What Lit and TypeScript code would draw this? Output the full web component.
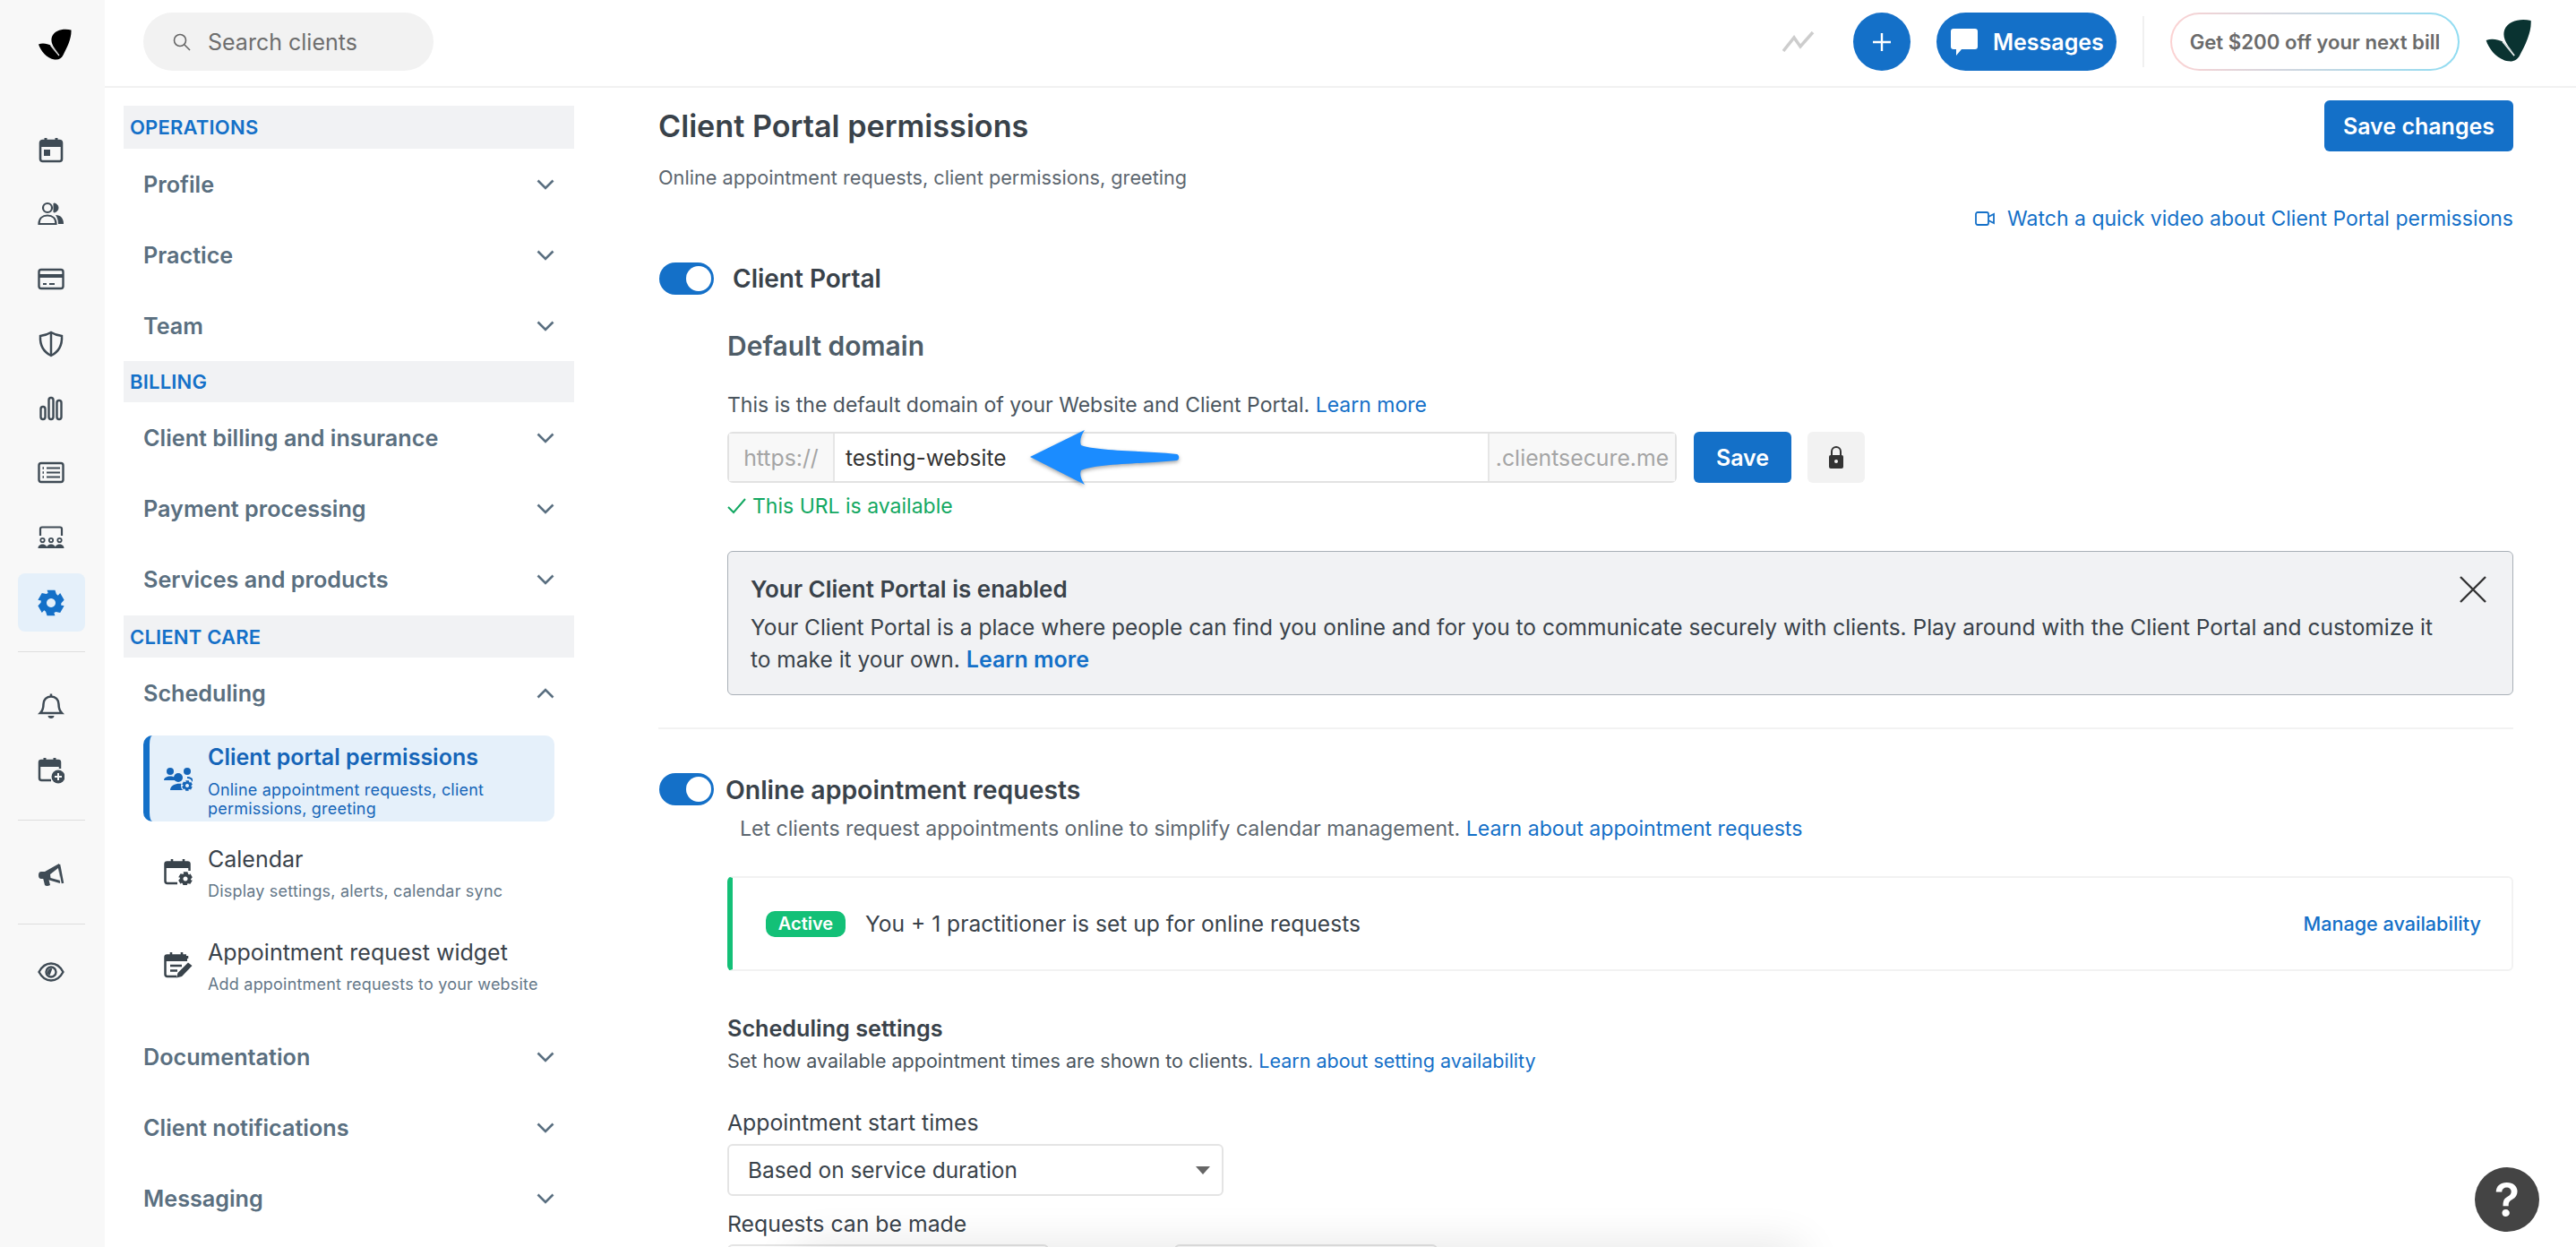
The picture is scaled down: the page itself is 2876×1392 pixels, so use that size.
import { LitElement, html, css, svg } from "lit";
import { customElement } from "lit/decorators.js";

const chev = (up = false) => html`<svg class="chev" viewBox="0 0 20 12" width="20" height="12"><path d="${up ? "M1.5 10.5 10 2l8.5 8.5" : "M1.5 1.5 10 10l8.5-8.5"}" fill="none" stroke="currentColor" stroke-width="2.6"/></svg>`;

const gearPath = (cx: number, cy: number, r: number) => {
  let d = "";
  for (let i = 0; i < 6; i++) {
    const a = (i * Math.PI) / 3 - Math.PI / 2;
    const p = (t: number, rad: number) => `${(cx + Math.cos(a + t) * rad).toFixed(2)} ${(cy + Math.sin(a + t) * rad).toFixed(2)}`;
    d += `${i ? "L" : "M"}${p(-0.3, r)}L${p(0.3, r)}L${p(0.55, r * 0.76)}L${p(0.75, r * 0.76)}`;
  }
  return d + "Z";
};

const railIcons: Record<string, unknown> = {
  calendar: svg`<path d="M9 1v5M21 1v5" stroke-width="3" /><rect x="3" y="4" width="24" height="23" rx="2.5" stroke-width="2.6"/><path d="M3 5h24v6H3z" fill="currentColor" stroke="none"/><rect x="7" y="14" width="7" height="7" fill="currentColor" stroke="none"/>`,
  people: svg`<circle cx="11" cy="7" r="5" stroke-width="2.2"/><path d="M1.5 25c0-6 4-9.500 9.500-9.500S20.500 19 20.500 25z" stroke-width="2.200"/><path d="M18 2a5 5 0 1 1 0 10z" fill="currentColor" stroke="currentColor"/><path d="M20 15c6 0 9 4 9 10h-6c0-4-1-7-3-10z" fill="currentColor" stroke="none"/>`,
  card: svg`<rect x="1.500" y="4" width="27" height="21" rx="2.500" stroke-width="2.400"/><path d="M2 9h26v4H2z" fill="currentColor" stroke="none"/><path d="M6 20h4M13 20h6" stroke-width="2.200"/>`,
  shield: svg`<path d="M15 2c4 2.500 8 3.500 12 4 .500 9-2 17-12 22C5 23 2.500 15 3 6c4-.500 8-1.500 12-4z" stroke-width="2.500"/><path d="M15 2v26" stroke-width="2.500"/>`,
  bars: svg`<rect x="3.500" y="13" width="5" height="14" rx="2.500" stroke-width="2.400"/><rect x="12.500" y="3" width="5" height="24" rx="2.500" stroke-width="2.400"/><rect x="21.500" y="6" width="5" height="21" rx="2.500" stroke-width="2.400"/>`,
  list: svg`<rect x="1.500" y="4" width="27" height="21" rx="2.500" stroke-width="2.400"/><path d="M10 9.500h15M10 14.500h15M10 19.500h15" stroke-width="2"/><path d="M5.500 9.500h1.500M5.500 14.500h1.500M5.500 19.500h1.500" stroke-width="2.600"/>`,
  team: svg`<path d="M3 13V5.500Q3 3.500 5 3.500h20q2 0 2 2V13" stroke-width="2.200"/><circle cx="5.500" cy="18" r="2.200" stroke-width="1.800"/><circle cx="15" cy="18" r="2.200" stroke-width="1.800"/><circle cx="24.500" cy="18" r="2.200" stroke-width="1.800"/><path d="M0.500 27c0-6 10-6 10 0zM10 27c0-6 10-6 10 0zM19.500 27c0-6 10-6 10 0z" fill="currentColor" stroke="none"/>`,
  gear: svg`<path fill-rule="evenodd" d="${gearPath(15, 15, 15)} M15 10a5 5 0 1 0 .01 0z" fill="currentColor" stroke="none"/>`,
  bell: svg`<path d="M3 23c3-3 3.500-6 3.500-10C6.500 8 10 4.500 15 4.500S23.500 8 23.500 13c0 4 .500 7 3.500 10z" stroke-width="2.500"/><path d="M15 1.500v3" stroke-width="2.500"/><path d="M11.500 26h7c0 4-7 4-7 0z" fill="currentColor" stroke="none"/>`,
  calplus: svg`<path d="M8 1v4M19 1v4" stroke-width="3"/><path d="M15 26H4.500Q2 26 2 23.500V6q0-2 2-2h19q2 0 2 2v7" stroke-width="2.500"/><path d="M2 5h23v6H2z" fill="currentColor" stroke="none"/><circle cx="23" cy="22" r="7.500" fill="currentColor" stroke="none"/><path d="M23 18v8M19 22h8" stroke="#f8f8f8" stroke-width="2"/>`,
  mega: svg`<path d="M24 2 8 11H4q-3 0-3 4t3 4h4l17 5z" fill="currentColor" stroke="none"/><path d="M23 7l-9 7 .5 4 11 3z" fill="#f8f8f8" stroke="none"/><path d="M24 3l4 21" stroke-width="2.500"/><path d="M6 18h6l2 8q-4 2-6 0z" fill="currentColor" stroke="none"/>`,
  eye: svg`<path d="M1.500 15C5 8.500 10 5.500 15 5.500S25 8.500 28.500 15C25 21.500 20 24.500 15 24.500S5 21.500 1.500 15z" stroke-width="2.400"/><circle cx="15" cy="15" r="5.500" stroke-width="2.400"/><path d="M15 11a4 4 0 0 1 4 4 4 4 0 0 1-4 4z" fill="currentColor" stroke="none" transform="rotate(200 15 15)"/>`,
};

const railIcon = (k: string) => html`<svg class="ri" viewBox="0 0 30 30" width="30" height="30" fill="none" stroke="currentColor">${railIcons[k]}</svg>`;

const logo = (cls: string) => html`<svg class="${cls}" viewBox="0 0 37 35"><path d="M36.500 1.500C28 -.5 18 1.500 15 9c-1.500 4.500 0 9 3 13l4.500 6-8-9C10 17 5 15.500 0 17.500 2.500 25 9 33 18 34.500c4.500.5 7.500-1 9.500-5C32 21 37 11 36.500 1.500z" fill="currentColor"/><path d="M13.500 18.500 23 30" stroke="#fff" stroke-opacity=".9" stroke-width="1.200" fill="none"/></svg>`;

const subIcons: Record<string, unknown> = {
  people: svg`<circle cx="7" cy="6" r="4" fill="currentColor"/><path d="M0 16c0-6 14-6 14 0z" fill="currentColor"/><circle cx="26" cy="6" r="4" fill="currentColor"/><circle cx="16" cy="13" r="5" fill="currentColor"/><path d="M7 27c0-9 18-9 18-3v3z" fill="currentColor"/><path d="M26 13c3 0 6 1.500 6 4.500" stroke="currentColor" stroke-width="2" fill="none"/><circle cx="26" cy="22" r="7" fill="#e5f0fa"/><path fill-rule="evenodd" d="${gearPath(26, 22, 6)} M26 20a2 2 0 1 0 .01 0z" fill="currentColor"/>`,
  cal: svg`<path d="M9 0v4M22 0v4" stroke="currentColor" stroke-width="2.600"/><path d="M15 27H4q-2.500 0-2.500-2.500V5.500Q1.500 3.500 3.500 3.500h23q2 0 2 2V13" fill="none" stroke="currentColor" stroke-width="2.500"/><path d="M2 4h26v6H2z" fill="currentColor"/><circle cx="24" cy="22" r="8" fill="#fff"/><path fill-rule="evenodd" d="${gearPath(24, 22, 8)} M24 19.500a2.500 2.500 0 1 0 .01 0z" fill="currentColor"/>`,
  edit: svg`<path d="M8 0v4M20 0v4" stroke="currentColor" stroke-width="2.600"/><path d="M26 4v3M14 27H4q-2.500 0-2.500-2.500V5.500Q1.500 3.500 3.500 3.500H25" fill="none" stroke="currentColor" stroke-width="2.500"/><path d="M2 4h24v6H2z" fill="currentColor"/><path d="M7 15h13M7 20.500h8" stroke="currentColor" stroke-width="2.500"/><path d="M27 11.500l4.500 3.500L20 27l-6 1.500 1.500-5.500z" fill="currentColor"/>`,
};

const subIcon = (k: string) => html`<svg class="si" viewBox="0 0 32 29" width="32" height="29">${subIcons[k]}</svg>`;

@customElement("app-root")
export class AppRoot extends LitElement {
  static styles = css`
    :host { display: block; width: 2876px; height: 1392px; overflow: hidden; position: relative; font-family: Inter, "Noto Sans", sans-serif; background: #fff; color: #39424a; }
    * { box-sizing: border-box; }
    a { color: #1470c8; text-decoration: none; }
    .app { display: grid; grid-template-columns: 117px 1fr; height: 1392px; }
    .rail { background: #f8f8f8; display: flex; flex-direction: column; align-items: center; color: #3f4b55; padding-right: 3px; }
    .rlogo { width: 37px; height: 35px; color: #000; margin: 32px 0 0 9px; flex: none; }
    .ribtn { width: 75px; height: 72px; display: flex; align-items: center; justify-content: center; flex: none; }
    .ribtn.act { background: #e5f0fa; border-radius: 8px; height: 65px; color: #1470c8; margin-top: 4px; }
    .rdiv { width: 75px; height: 1px; background: #dedede; flex: none; }
    .rgroup1 { margin-top: 65px; display: flex; flex-direction: column; align-items: center; }
    .right { display: flex; flex-direction: column; min-width: 0; height: 1392px; }
    .top { height: 98px; flex: none; border-bottom: 2px solid #f1f1f1; display: flex; align-items: flex-start; padding: 14px 0 0 43px; }
    .search { width: 324px; height: 65px; border-radius: 33px; background: #f2f2f2; display: flex; align-items: center; padding-left: 33px; gap: 19px; color: #6e6e6e; font-size: 25px; }
    .search svg { flex: none; }
    .topr { margin-left: auto; display: flex; align-items: center; height: 65px; padding-right: 49px; }
    .trend { color: #cdcdcd; margin-right: 43px; }
    .plus { width: 64px; height: 65px; border-radius: 50%; background: #1470c8; display: flex; align-items: center; justify-content: center; margin-right: 29px; }
    .msg { width: 201px; height: 65px; border-radius: 33px; background: #1470c8; color: #fff; font-weight: 600; font-size: 25px; display: flex; align-items: center; padding-left: 16px; gap: 17px; }
    .vsep { width: 2px; height: 57px; background: #f0f0f0; margin: 0 29px; }
    .promo { width: 323px; height: 65px; border-radius: 33px; padding: 2px; background: linear-gradient(90deg, #fcd2d2, #8fdcf2); }
    .promo div { height: 100%; border-radius: 31px; background: #fff; color: #6b6b6b; font-weight: 600; font-size: 22.200px; display: flex; align-items: center; justify-content: center; white-space: nowrap; }
    .tlogo { width: 52px; height: 48px; color: #0a3331; margin: -3px 0 0 29px; }
    .body { flex: 1; display: flex; min-height: 0; overflow: hidden; }
    .nav { width: 503px; margin-left: 21px; padding-top: 20px; flex: none; }
    .band { background: #f1f2f4; color: #1470c8; font-size: 22px; font-weight: 600; height: 46px; display: flex; align-items: center; padding-left: 7px; letter-spacing: .2px; }
    .band.first { height: 48px; }
    .band.third { height: 47px; margin-top: 1px; }
    .item { height: 79px; display: flex; align-items: center; justify-content: space-between; padding: 0 22px; font-size: 25.200px; font-weight: 600; color: #5a6f80; }
    .subs { padding: 8px 22px 7px; }
    .sub { height: 104px; display: grid; grid-template-columns: 72px 1fr; align-items: center; }
    .sub.act { height: 96px; margin-bottom: 8px; background: #e5f0fa; border-radius: 10px; border-left: 7px solid #1470c8; color: #1565b8; grid-template-columns: 65px 1fr; }
    .si { margin: 0 0 8px 23px; color: #39434b; display: block; }
    .sub.act .si { margin: 0 0 0 16px; color: #1565b8; }
    .stx { padding-bottom: 7px; }
    .sub.act .stx { padding: 2px 0 0; }
    .st { font-size: 25px; line-height: 34px; color: #39424a; }
    .sd { font-size: 18px; line-height: 21px; color: #647788; margin-top: 8px; letter-spacing: .2px; white-space: nowrap; }
    .sub.act .st { color: #1565b8; font-weight: 600; }
    .sub.act .sd { color: #1565b8; margin-top: 9px; white-space: normal; }
    .main { width: 2071px; margin-left: 94px; flex: none; position: relative; }
    .head { margin-top: 14px; height: 57px; display: flex; justify-content: space-between; align-items: center; }
    h1 { margin: 0; font-size: 34.200px; font-weight: 600; color: #39424a; }
    .btn { background: #1470c8; color: #fff; font-weight: 600; font-size: 25px; border-radius: 6px; display: flex; align-items: center; justify-content: center; }
    .savec { width: 211px; height: 57px; }
    .subt { margin-top: 12px; line-height: 34px; font-size: 21.700px; color: #5d6770; }
    .watch { margin-top: 12px; line-height: 34px; font-size: 23px; display: flex; justify-content: flex-end; align-items: center; gap: 14px; color: #1470c8; }
    .tog { width: 61px; height: 36px; border-radius: 18px; background: #1470c8; position: relative; flex: none; }
    .tog::after { content: ""; position: absolute; right: 3px; top: 4px; width: 28px; height: 28px; border-radius: 50%; background: #fff; }
    .trow { display: flex; align-items: center; margin-top: 32px; gap: 21px; font-size: 28px; font-weight: 600; color: #39424a; padding-left: 1px; }
    .indent { padding-left: 77px; }
    .dd { margin: 37px 0 0; font-size: 30px; line-height: 40px; font-weight: 600; color: #4f5d68; }
    .p24 { font-size: 23px; line-height: 34px; color: #4a555e; margin-top: 29px; }
    .inrow { display: flex; margin-top: 13px; height: 57px; gap: 19px; }
    .ig { width: 1060px; display: flex; border: 2px solid #e2e2e2; border-radius: 6px; position: relative; font-size: 24.800px; }
    .ad { background: #f8f8f8; color: #a5a5a5; display: flex; align-items: center; justify-content: center; white-space: nowrap; }
    .ad.l { width: 118px; border-right: 2px solid #e6e6e6; }
    .ad.r { width: 209px; border-left: 2px solid #e6e6e6; }
    .val { flex: 1; display: flex; align-items: center; padding-left: 12px; color: #333; font-size: 24.500px; }
    .arrow { position: absolute; left: 334px; top: -5px; filter: drop-shadow(0 2px 2px rgba(0,0,0,.35)); }
    .save { width: 109px; }
    .lock { width: 64px; margin-left: -1px; background: #f2f2f2; border-radius: 6px; display: flex; align-items: center; justify-content: center; }
    .ok { margin-top: 9px; line-height: 34px; font-size: 23px; color: #13a862; display: flex; align-items: center; gap: 7px; }
    .alert { position: relative; margin-top: 33px; height: 161px; background: #f1f2f4; border: 1.500px solid #a9b0b7; border-radius: 6px; padding: 24px 25px; font-size: 24.500px; line-height: 36px; color: #39424a; white-space: nowrap; }
    .alert b { display: block; font-weight: 600; line-height: 35px; margin-bottom: 7px; font-size: 26px; }
    .alert a { font-weight: 600; font-size: 25px; }
    .x { position: absolute; right: 28px; top: 26px; }
    .hr { margin-top: 36px; height: 2px; background: #f2f2f2; }
    .t2 { margin-top: 49px; gap: 13px; font-size: 28.400px; }
    .d2 { margin-top: 9px; padding-left: 91px; font-size: 23.100px; line-height: 34px; color: #5d6770; }
    .card { margin: 36px 0 0 77px; height: 106px; border: 2px solid #f2f2f2; border-left: 6px solid #13c077; border-radius: 6px; display: flex; align-items: center; padding: 0 34px 0 37px; font-size: 24.600px; color: #39424a; }
    .badge { background: #13c077; color: #fff; font-weight: 600; font-size: 20px; height: 29px; width: 89px; border-radius: 10px; display: flex; align-items: center; justify-content: center; margin-right: 22px; }
    .card a { margin-left: auto; font-size: 21.600px; font-weight: 500; }
    .sh { margin-top: 47px; font-size: 25.200px; line-height: 34px; font-weight: 600; color: #39424a; }
    .sp { margin-top: 3px; font-size: 21.500px; line-height: 32px; color: #4a555e; }
    .lab { margin-top: 36px; font-size: 24.800px; line-height: 34px; color: #39424a; }
    .lab.l2 { margin-top: 14px; }
    .sel { margin-top: 7px; width: 554px; height: 58px; border: 2px solid #e4e4e4; border-radius: 6px; display: flex; align-items: center; justify-content: space-between; padding: 0 13px 0 21px; font-size: 24.400px; color: #39424a; }
    .tri { width: 0; height: 0; border-left: 8px solid transparent; border-right: 8px solid transparent; border-top: 9px solid #666; }
    .two { margin-top: 6px; display: flex; gap: 140px; }
    .two div { height: 40px; border: 2px solid #e4e4e4; border-radius: 6px; }
    .help { position: absolute; left: 2763px; top: 1303px; width: 72px; height: 72px; border-radius: 50%; background: #444; color: #fff; font-size: 52px; font-weight: 600; display: flex; align-items: center; justify-content: center; }
    .fade { position: absolute; left: 900px; top: 1404px; width: 1100px; height: 10px; box-shadow: 0 0 50px 10px rgba(0,0,0,.14); }
  `;

  private sect(name: string, items: string[], first = false) {
    return html`<div class="band ${first ? "first" : ""}">${name}</div>${items.map((i) => html`<div class="item">${i}${chev()}</div>`)}`;
  }

  render() {
    return html`<div class="app">
      <aside class="rail">
        ${logo("rlogo")}
        <div class="rgroup1">
          ${["calendar", "people", "card", "shield", "bars", "list", "team"].map((k) => html`<div class="ribtn">${railIcon(k)}</div>`)}
          <div class="ribtn act">${railIcon("gear")}</div>
        </div>
        <div class="rdiv" style="margin-top:22px"></div>
        <div class="ribtn" style="margin-top:24px">${railIcon("bell")}</div>
        <div class="ribtn">${railIcon("calplus")}</div>
        <div class="rdiv" style="margin-top:19px"></div>
        <div class="ribtn" style="margin-top:25px">${railIcon("mega")}</div>
        <div class="rdiv" style="margin-top:18px"></div>
        <div class="ribtn" style="margin-top:17px">${railIcon("eye")}</div>
      </aside>
      <div class="right">
        <header class="top">
          <div class="search">
            <svg width="20" height="20" viewBox="0 0 20 20" fill="none" stroke="#666" stroke-width="1.600"><circle cx="8" cy="8" r="6.500"/><path d="m13 13 6 6"/></svg>
            Search clients
          </div>
          <div class="topr">
            <svg class="trend" width="36" height="24" viewBox="0 0 36 24" fill="none" stroke="currentColor" stroke-width="3.500"><path d="M1 22 13 7l7 10L34 1"/></svg>
            <div class="plus"><svg width="22" height="22" viewBox="0 0 22 22" stroke="#fff" stroke-width="2.400"><path d="M11 1v20M1 11h20"/></svg></div>
            <div class="msg">
              <svg width="30" height="30" viewBox="0 0 30 30" fill="#fff"><path d="M3 0h24q3 0 3 3v17q0 3-3 3H12l-6 7v-7H3q-3 0-3-3V3q0-3 3-3z"/></svg>
              Messages
            </div>
            <div class="vsep"></div>
            <div class="promo"><div>Get $200 off your next bill</div></div>
            ${logo("tlogo")}
          </div>
        </header>
        <div class="body">
          <nav class="nav">
            ${this.sect("OPERATIONS", ["Profile", "Practice", "Team"], true)}
            ${this.sect("BILLING", ["Client billing and insurance", "Payment processing", "Services and products"])}
            <div class="band third">CLIENT CARE</div>
            <div class="item">Scheduling${chev(true)}</div>
            <div class="subs">
              <div class="sub act">${subIcon("people")}<div class="stx"><div class="st">Client portal permissions</div><div class="sd">Online appointment requests, client permissions, greeting</div></div></div>
              <div class="sub">${subIcon("cal")}<div class="stx"><div class="st">Calendar</div><div class="sd">Display settings, alerts, calendar sync</div></div></div>
              <div class="sub">${subIcon("edit")}<div class="stx"><div class="st">Appointment request widget</div><div class="sd">Add appointment requests to your website</div></div></div>
            </div>
            ${["Documentation", "Client notifications", "Messaging"].map((i) => html`<div class="item">${i}${chev()}</div>`)}
          </nav>
          <main class="main">
            <div class="head"><h1>Client Portal permissions</h1><div class="btn savec">Save changes</div></div>
            <div class="subt">Online appointment requests, client permissions, greeting</div>
            <div class="watch">
              <svg width="22" height="16" viewBox="0 0 22 16" fill="none" stroke="currentColor" stroke-width="1.800"><rect x="1" y="1" width="14" height="14" rx="2"/><path d="m15 6 6-3v10l-6-3"/></svg>
              <a>Watch a quick video about Client Portal permissions</a>
            </div>
            <div class="trow"><div class="tog"></div>Client Portal</div>
            <div class="indent">
              <h2 class="dd">Default domain</h2>
              <div class="p24">This is the default domain of your Website and Client Portal. <a>Learn more</a></div>
              <div class="inrow">
                <div class="ig">
                  <div class="ad l">https://</div>
                  <div class="val">testing-website</div>
                  <div class="ad r">.clientsecure.me</div>
                  <svg class="arrow" width="172" height="68" viewBox="0 0 172 68"><path d="M2 31 63 1c-4 6-6 12-4 17 20 7 70 6 107 10 3 1 3 6 0 7-37 4-87 3-107 11-2 5 0 10 4 16z" fill="#1b8cff"/></svg>
                </div>
                <div class="btn save">Save</div>
                <div class="lock"><svg width="18" height="26" viewBox="0 0 18 26"><path d="M4 10V6a5 5 0 0 1 10 0v4" fill="none" stroke="#333" stroke-width="2"/><rect x="1" y="10" width="16" height="15" rx="2" fill="#333"/><circle cx="9" cy="17" r="2" fill="#f2f2f2"/></svg></div>
              </div>
              <div class="ok"><svg width="21" height="18" viewBox="0 0 21 18" fill="none" stroke="currentColor" stroke-width="2"><path d="m1 10 6 6L20 1"/></svg>This URL is available</div>
              <div class="alert">
                <b>Your Client Portal is enabled</b>
                <div>Your Client Portal is a place where people can find you online and for you to communicate securely with clients. Play around with the Client Portal and customize it</div>
                <div>to make it your own. <a>Learn more</a></div>
                <svg class="x" width="32" height="32" viewBox="0 0 32 32" stroke="#333" stroke-width="2.400"><path d="m2 2 28 28M30 2 2 30"/></svg>
              </div>
            </div>
            <div class="hr"></div>
            <div class="trow t2"><div class="tog"></div>Online appointment requests</div>
            <div class="d2">Let clients request appointments online to simplify calendar management. <a>Learn about appointment requests</a></div>
            <div class="card"><span class="badge">Active</span>You + 1 practitioner is set up for online requests<a>Manage availability</a></div>
            <div class="indent">
              <div class="sh">Scheduling settings</div>
              <div class="sp">Set how available appointment times are shown to clients. <a>Learn about setting availability</a></div>
              <div class="lab">Appointment start times</div>
              <div class="sel">Based on service duration<span class="tri"></span></div>
              <div class="lab l2">Requests can be made</div>
              <div class="two"><div style="width:359px"></div><div style="width:294px"></div></div>
            </div>
          </main>
        </div>
      </div>
    </div>
    <div class="fade"></div>
    <div class="help">?</div>`;
  }
}
